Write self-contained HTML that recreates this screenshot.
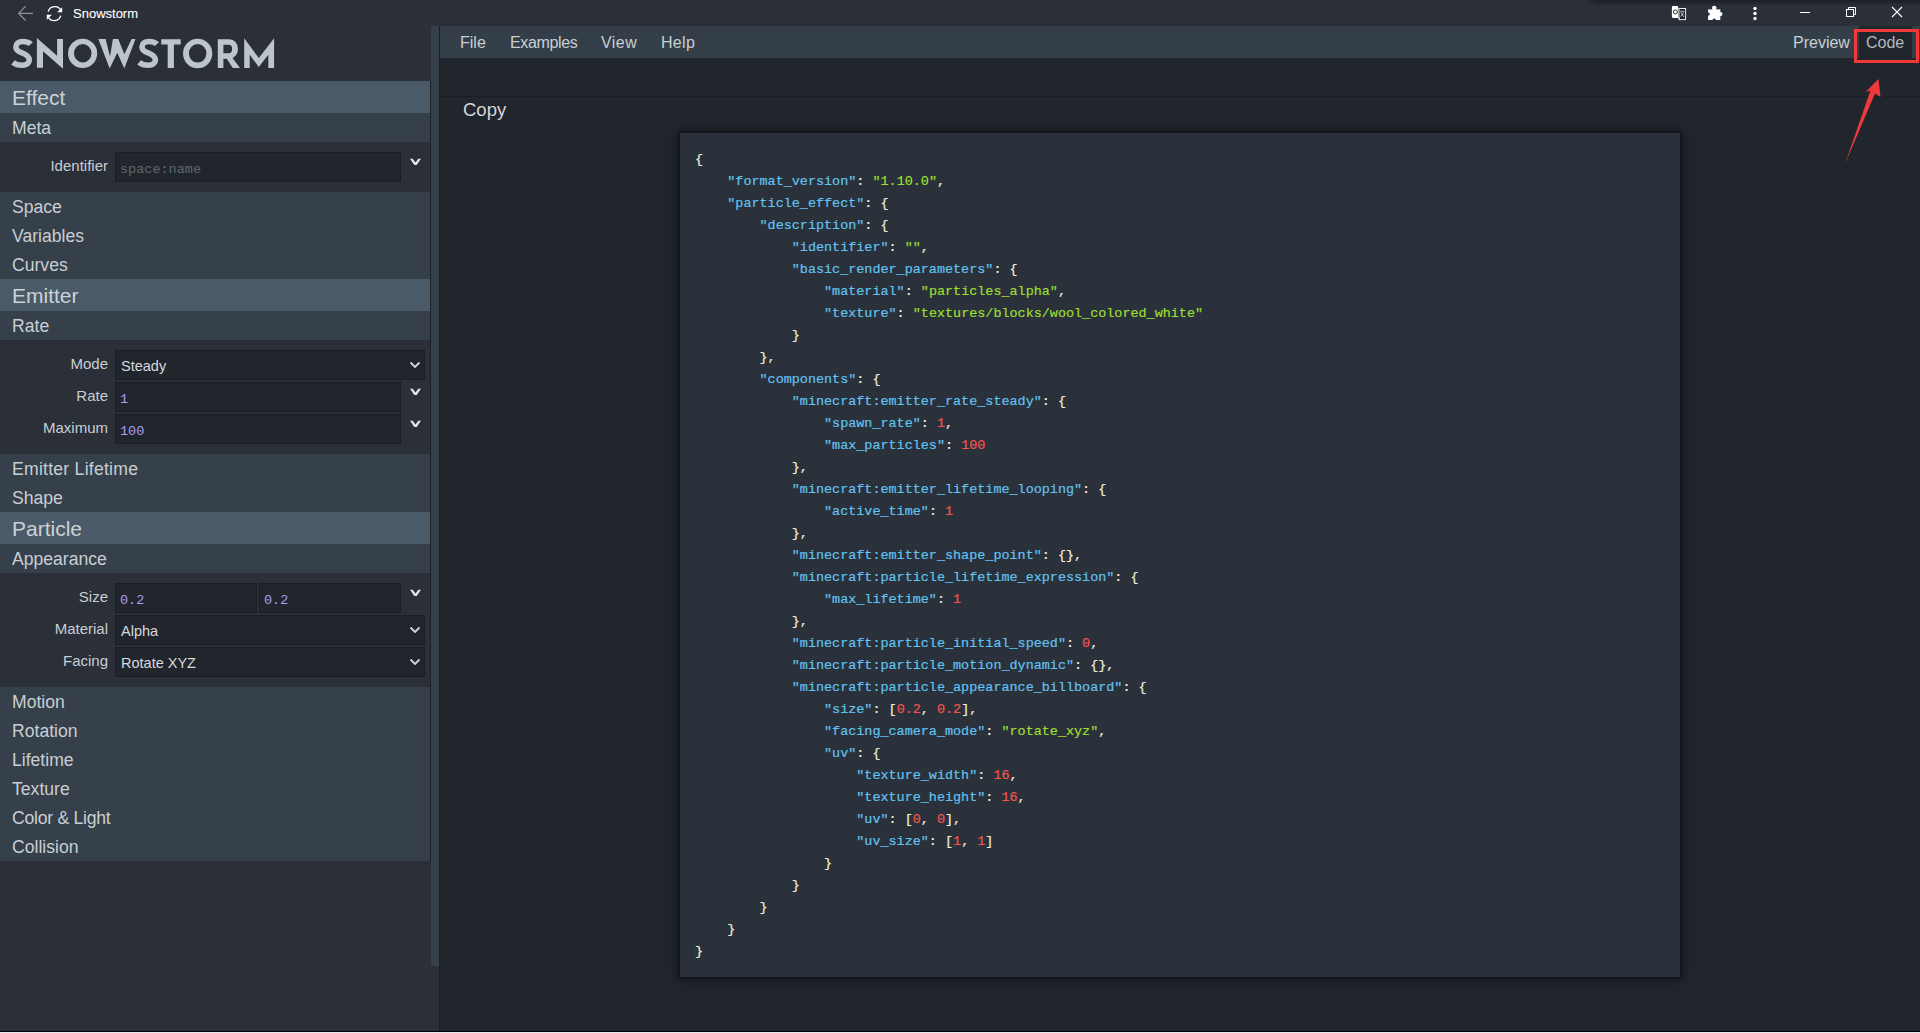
<!DOCTYPE html>
<html><head><meta charset="utf-8">
<style>
*{box-sizing:border-box;margin:0;padding:0}
html,body{width:1920px;height:1033px;overflow:hidden;background:#2a2f38;font-family:"Liberation Sans",sans-serif;color:#c9ced3;position:relative}
.abs{position:absolute}
#topshade{position:absolute;left:1588px;top:0;width:332px;height:6px;background:linear-gradient(rgba(20,23,27,0.75),rgba(20,23,27,0.35) 40%,rgba(42,47,56,0));-webkit-mask-image:linear-gradient(to right,transparent,#000 8px)}
#ttl{position:absolute;left:73px;top:6px;font-size:13px;line-height:16px;color:#fff;-webkit-text-stroke:0.1px #fff}
#logo{position:absolute;left:12px;top:31px;font-size:40px;line-height:44px;font-weight:bold;color:#bcc3ca;transform-origin:0 0;white-space:nowrap}
.hd{position:absolute;left:0;width:430px;height:32px;line-height:34px;background:#4b5a69;color:#cdd2d7;font-size:21px;padding-left:12px;white-space:nowrap}
.sb{position:absolute;left:0;width:430px;height:29px;line-height:31px;background:#35404a;color:#c9ced3;font-size:17.6px;padding-left:12px;white-space:nowrap}
.form{position:absolute;left:0;width:430px;background:#2a2f38}
.lbl{position:absolute;left:0;width:108px;height:30px;line-height:28px;font-size:15px;color:#c9ced3;text-align:right;white-space:nowrap}
.inp{position:absolute;height:30px;line-height:30px;background:#21262d;border:1px solid #1a1e23;font-family:"Liberation Mono",monospace;font-size:13.5px;line-height:33px;color:#ad9df8;padding-left:4px;white-space:nowrap}
.inp.ph{color:#62676d}
.sel{position:absolute;left:115px;width:310px;height:30px;line-height:30px;background:#21262d;border:1px solid #1a1e23;font-size:14.5px;color:#d5d9dd;padding-left:5px;white-space:nowrap}
#scroll{position:absolute;left:431px;top:26px;width:8px;height:940px;background:#36404a}
#vline{position:absolute;left:439px;top:26px;width:1px;height:1005px;background:#1c2025}
#main{position:absolute;left:440px;top:26px;width:1480px;height:1005px;background:#21262d}
#menubar{position:absolute;left:440px;top:26px;width:1480px;height:32px;background:#343e48}
.mi{position:absolute;top:33px;font-size:16px;line-height:20px;color:#c9ced3;white-space:nowrap}
#hline{position:absolute;left:440px;top:96px;width:1480px;height:1px;background:#1a1d22}
#copy{position:absolute;left:463px;top:99px;font-size:18.5px;line-height:22px;color:#d2d6da}
#codetab{position:absolute;left:1859px;top:26px;width:53px;height:32px;background:#21262d}
#code{position:absolute;left:680px;top:133px;width:1000px;height:844px;background:#2a313a;box-shadow:0 0 3px 1px rgba(0,0,0,0.45),0 0 12px 2px rgba(0,0,0,0.45)}
pre{position:absolute;left:15px;top:16px;font-family:"Liberation Mono",monospace;font-size:13.45px;line-height:22px;color:#f4eddc;-webkit-text-stroke:0.2px currentColor}
.k{color:#62c2f0}.s{color:#9cde30}.n{color:#f4544d}
#bot1{position:absolute;left:0;top:1031px;width:1920px;height:1px;background:#000}
#bot2{position:absolute;left:0;top:1032px;width:1920px;height:1px;background:#e6eaee}
</style></head><body>
<div id="topshade"></div>
<svg class="abs" style="left:10px;top:0px" width="30" height="26" viewBox="10 0 30 26"><path d="M18.6 13.4H33M25.6 6.3L18.6 13.4L25.6 20.5" stroke="#8c9198" stroke-width="1.25" fill="none"/></svg>
<svg class="abs" style="left:40px;top:0px" width="30" height="26" viewBox="40 0 30 26"><g fill="none" stroke="#fff" stroke-width="1.3"><path d="M48.2 11.6A6.8 6.8 0 0 1 61 10.6"/><path d="M60.8 15.6A6.8 6.8 0 0 1 48 16.4"/></g><path d="M62.2 7.2V12.3H57.1Z M46.8 19.8V14.7H51.9Z" fill="#fff"/></svg>
<div id="ttl">Snowstorm</div>
<!-- window controls -->
<svg class="abs" style="left:1668px;top:2px" width="22" height="22" viewBox="1668 2 22 22"><rect x="1679" y="8.5" width="6.6" height="11.1" fill="#1f2328" stroke="#e8eaec" stroke-width="1"/><path d="M1673 5.9H1677.2Q1678.2 5.9 1678.2 6.9V17.9H1673Q1671.9 17.9 1671.9 16.8V7Q1671.9 5.9 1673 5.9Z" fill="#fff"/><path d="M1678 17.5H1679.6V20.1H1680.2Z" fill="#fff"/><circle cx="1675.4" cy="11.9" r="2" fill="none" stroke="#2a2f38" stroke-width="1"/><path d="M1680.3 11.3H1684.2M1680.8 12.3L1683.9 16.9M1683.7 12.3L1680.9 16.6" stroke="#d8dadd" stroke-width="0.9" fill="none"/></svg>
<svg class="abs" style="left:1700px;top:0px" width="30" height="26" viewBox="1700 0 30 26"><rect x="1708.1" y="9.4" width="12.2" height="10.6" fill="#fff"/><circle cx="1714.2" cy="8.1" r="2.3" fill="#fff"/><circle cx="1720.4" cy="14.1" r="2.1" fill="#fff"/><circle cx="1708.1" cy="14.1" r="1.7" fill="#2a2f38"/><circle cx="1714.2" cy="20.2" r="1.7" fill="#2a2f38"/></svg>
<svg class="abs" style="left:1752px;top:5px" width="6" height="16" viewBox="0 0 6 16"><circle cx="3" cy="3.5" r="1.7" fill="#fff"/><circle cx="3" cy="8.5" r="1.7" fill="#fff"/><circle cx="3" cy="13.5" r="1.7" fill="#fff"/></svg>
<div class="abs" style="left:1800px;top:12px;width:10px;height:1px;background:#fff"></div>
<svg class="abs" style="left:1845px;top:6px" width="12" height="12" viewBox="0 0 12 12"><rect x="1.5" y="3.5" width="7" height="7" fill="none" stroke="#fff" stroke-width="1"/><path d="M3.5 3.5V1.5H10.5V8.5H8.5" fill="none" stroke="#fff" stroke-width="1"/></svg>
<svg class="abs" style="left:1891px;top:6px" width="12" height="12" viewBox="0 0 12 12"><path d="M1 1L11 11M11 1L1 11" stroke="#fff" stroke-width="1.1"/></svg>

<svg class="abs" style="left:0;top:30px" width="290" height="45" viewBox="0 30 290 45"><g fill="#bec4cb">
<path d="M36.9 67.8V37.9L57.1 55.7V39H63V68.8L43 51.3V67.8Z"/>
<path fill-rule="evenodd" d="M68 53.4A14.6 14.7 0 1 0 97.2 53.4A14.6 14.7 0 1 0 68 53.4ZM74 53.25A8.75 9.35 0 1 0 91.5 53.25A8.75 9.35 0 1 0 74 53.25Z"/>
<path d="M98.3 39H105.6L110 56.4L112.9 39H118.3L124.3 54.3L131.6 39H135.5L124.3 68.6L117.3 52.75L109.7 68.6Z"/>
<path d="M161.2 39.2H180.7V44.4H173.9V67.9H167.7V44.4H161.2Z"/>
<path fill-rule="evenodd" d="M183 53.45A14.65 14.75 0 1 0 212.3 53.45A14.65 14.75 0 1 0 183 53.45ZM188.9 53.35A8.75 9.25 0 1 0 206.4 53.35A8.75 9.25 0 1 0 188.9 53.35Z"/>
<path fill-rule="evenodd" d="M217.8 39.2H229.5A8.5 9.75 0 0 1 229.5 58.7H223.4V67.9H217.8ZM223.4 44.7V53.2H228.8A3.3 4.25 0 0 0 228.8 44.7Z"/>
<path d="M225.3 56.5H231.5L240 67.9H232.8Z"/>
<path d="M244.2 67.9V38.2L258.8 58.1L274.1 38.2V67.9H268.3V54.8L258.8 66.9L249.7 54.8V67.9Z"/>
</g><g fill="none" stroke="#bec4cb" stroke-width="5.6">
<path id="S1" d="M30.8 44.2C29 42.2 26.5 41.5 22.8 41.5C18.6 41.5 15.9 43.7 15.9 47C15.9 50.3 18.5 51.6 22 52.9C26 54.4 29.3 56 29.3 60C29.3 63 26.6 65.2 22.3 65.2C18.6 65.2 15.4 64.4 13 62.3"/>
<path transform="translate(126.1 0)" d="M30.8 44.2C29 42.2 26.5 41.5 22.8 41.5C18.6 41.5 15.9 43.7 15.9 47C15.9 50.3 18.5 51.6 22 52.9C26 54.4 29.3 56 29.3 60C29.3 63 26.6 65.2 22.3 65.2C18.6 65.2 15.4 64.4 13 62.3"/>
</g></svg>
<div class="hd" style="top:81px">Effect</div><div class="sb" style="top:113px">Meta</div><div class="form" style="top:142px;height:50px"></div><div class="lbl" style="top:152px">Identifier</div><div class="inp ph" style="top:152px;left:115px;width:286px">space:name</div><svg class="abs" style="left:410px;top:158px" width="12" height="8" viewBox="0 0 12 8"><path d="M0 0.8H2.7L5.5 4.6L8.3 0.8H11L6.7 7H4.3Z" fill="#e2e6ea"/></svg><div class="sb" style="top:192px">Space</div><div class="sb" style="top:221px">Variables</div><div class="sb" style="top:250px">Curves</div><div class="hd" style="top:279px">Emitter</div><div class="sb" style="top:311px">Rate</div><div class="form" style="top:340px;height:114px"></div><div class="lbl" style="top:350px">Mode</div><div class="sel" style="top:350px">Steady</div><svg class="abs" style="left:409px;top:361px" width="12" height="8" viewBox="0 0 12 8"><path d="M1.5 1.5L6 6L10.5 1.5" stroke="#d0d4d8" stroke-width="1.9" fill="none"/></svg><div class="lbl" style="top:382px">Rate</div><div class="inp " style="top:382px;left:115px;width:286px">1</div><svg class="abs" style="left:410px;top:388px" width="12" height="8" viewBox="0 0 12 8"><path d="M0 0.8H2.7L5.5 4.6L8.3 0.8H11L6.7 7H4.3Z" fill="#e2e6ea"/></svg><div class="lbl" style="top:414px">Maximum</div><div class="inp " style="top:414px;left:115px;width:286px">100</div><svg class="abs" style="left:410px;top:420px" width="12" height="8" viewBox="0 0 12 8"><path d="M0 0.8H2.7L5.5 4.6L8.3 0.8H11L6.7 7H4.3Z" fill="#e2e6ea"/></svg><div class="sb" style="top:454px"><span style="letter-spacing:0.25px">Emitter Lifetime</span></div><div class="sb" style="top:483px">Shape</div><div class="hd" style="top:512px">Particle</div><div class="sb" style="top:544px">Appearance</div><div class="form" style="top:573px;height:114px"></div><div class="lbl" style="top:583px">Size</div><div class="inp " style="top:583px;left:115px;width:142px">0.2</div><div class="inp " style="top:583px;left:259px;width:142px">0.2</div><svg class="abs" style="left:410px;top:589px" width="12" height="8" viewBox="0 0 12 8"><path d="M0 0.8H2.7L5.5 4.6L8.3 0.8H11L6.7 7H4.3Z" fill="#e2e6ea"/></svg><div class="lbl" style="top:615px">Material</div><div class="sel" style="top:615px">Alpha</div><svg class="abs" style="left:409px;top:626px" width="12" height="8" viewBox="0 0 12 8"><path d="M1.5 1.5L6 6L10.5 1.5" stroke="#d0d4d8" stroke-width="1.9" fill="none"/></svg><div class="lbl" style="top:647px">Facing</div><div class="sel" style="top:647px">Rotate XYZ</div><svg class="abs" style="left:409px;top:658px" width="12" height="8" viewBox="0 0 12 8"><path d="M1.5 1.5L6 6L10.5 1.5" stroke="#d0d4d8" stroke-width="1.9" fill="none"/></svg><div class="sb" style="top:687px">Motion</div><div class="sb" style="top:716px">Rotation</div><div class="sb" style="top:745px">Lifetime</div><div class="sb" style="top:774px">Texture</div><div class="sb" style="top:803px"><span style="letter-spacing:-0.25px">Color &amp; Light</span></div><div class="sb" style="top:832px">Collision</div>
<div id="scroll"></div><div class="abs" style="left:430px;top:81px;width:1px;height:780px;background:#1c1f24"></div>
<div id="vline"></div>
<div id="main"></div>
<div id="menubar"></div>
<div class="mi" style="left:460px">File</div>
<div class="mi" style="left:510px;letter-spacing:-0.37px">Examples</div>
<div class="mi" style="left:601px;letter-spacing:0.45px">View</div>
<div class="mi" style="left:661px;letter-spacing:0.3px">Help</div>
<div id="codetab"></div>
<div class="mi" style="left:1793px">Preview</div>
<div class="mi" style="left:1866px;color:#b3bac1">Code</div>
<div id="hline"></div>
<div id="copy">Copy</div>
<div id="code"><pre>{
    <span class="k">"format_version"</span>: <span class="s">"1.10.0"</span>,
    <span class="k">"particle_effect"</span>: {
        <span class="k">"description"</span>: {
            <span class="k">"identifier"</span>: <span class="s">""</span>,
            <span class="k">"basic_render_parameters"</span>: {
                <span class="k">"material"</span>: <span class="s">"particles_alpha"</span>,
                <span class="k">"texture"</span>: <span class="s">"textures/blocks/wool_colored_white"</span>
            }
        },
        <span class="k">"components"</span>: {
            <span class="k">"minecraft:emitter_rate_steady"</span>: {
                <span class="k">"spawn_rate"</span>: <span class="n">1</span>,
                <span class="k">"max_particles"</span>: <span class="n">100</span>
            },
            <span class="k">"minecraft:emitter_lifetime_looping"</span>: {
                <span class="k">"active_time"</span>: <span class="n">1</span>
            },
            <span class="k">"minecraft:emitter_shape_point"</span>: {},
            <span class="k">"minecraft:particle_lifetime_expression"</span>: {
                <span class="k">"max_lifetime"</span>: <span class="n">1</span>
            },
            <span class="k">"minecraft:particle_initial_speed"</span>: <span class="n">0</span>,
            <span class="k">"minecraft:particle_motion_dynamic"</span>: {},
            <span class="k">"minecraft:particle_appearance_billboard"</span>: {
                <span class="k">"size"</span>: [<span class="n">0.2</span>, <span class="n">0.2</span>],
                <span class="k">"facing_camera_mode"</span>: <span class="s">"rotate_xyz"</span>,
                <span class="k">"uv"</span>: {
                    <span class="k">"texture_width"</span>: <span class="n">16</span>,
                    <span class="k">"texture_height"</span>: <span class="n">16</span>,
                    <span class="k">"uv"</span>: [<span class="n">0</span>, <span class="n">0</span>],
                    <span class="k">"uv_size"</span>: [<span class="n">1</span>, <span class="n">1</span>]
                }
            }
        }
    }
}
</pre></div>
<!-- annotation -->
<div class="abs" style="left:1854px;top:29px;width:65px;height:34px;border:3px solid #f03a3a"></div>
<svg class="abs" style="left:1830px;top:70px" width="60" height="100" viewBox="1830 70 60 100"><path d="M1878.5 79L1880.5 97L1875 93.5L1845 164L1870.5 90.5L1865.5 92Z" fill="#ee3a3a"/></svg>
<div id="bot1"></div><div id="bot2"></div>
</body></html>
